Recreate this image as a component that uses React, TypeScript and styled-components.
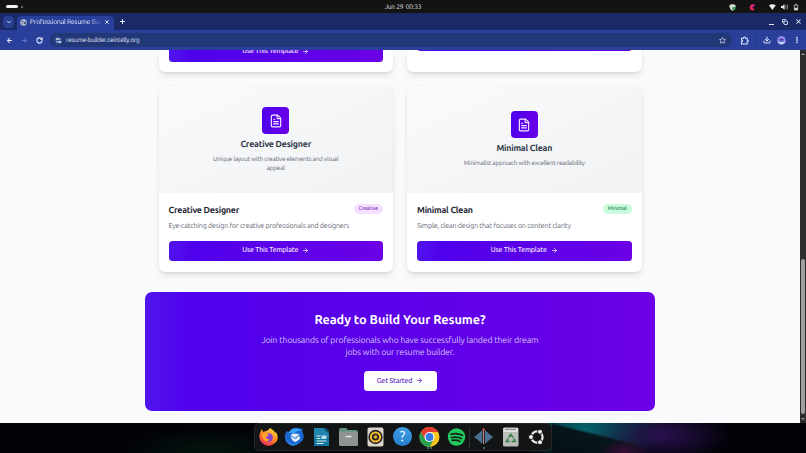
import * as React from 'react';
import styled, { createGlobalStyle } from 'styled-components';
import {
  ArrowLeft,
  ArrowRight,
  ChevronDown,
  Copy,
  Download,
  EllipsisVertical,
  FileText,
  Minus,
  Plus,
  RotateCw,
  Settings2,
  Star,
  X,
} from 'lucide-react';

type TTone = 'creative' | 'minimal';

type TTemplate = {
  name: string;
  preview: string;
  description: string;
  tag: string;
  tone: TTone;
};

const templates: TTemplate[] = [
  {
    name: 'Creative Designer',
    preview: 'Unique layout with creative elements and visual appeal',
    description: 'Eye-catching design for creative professionals and designers',
    tag: 'Creative',
    tone: 'creative',
  },
  {
    name: 'Minimal Clean',
    preview: 'Minimalist approach with excellent readability',
    description: 'Simple, clean design that focuses on content clarity',
    tag: 'Minimal',
    tone: 'minimal',
  },
];

const GlobalStyle = createGlobalStyle`
  * {
    box-sizing: border-box;
  }
  body {
    margin: 0;
    overflow: hidden;
    background: #000;
    font-family: Ubuntu, 'Noto Sans', 'Open Sans', sans-serif;
    text-rendering: geometricPrecision;
  }
  h2, h3, p {
    margin: 0;
  }
  svg {
    display: block;
    flex: none;
  }
`;

const Desktop = styled.div`
  width: 806px;
  height: 453px;
  display: flex;
  flex-direction: column;
  overflow: hidden;
`;

const SystemBar = styled.header`
  height: 13px;
  flex: none;
  display: grid;
  grid-template-columns: 1fr auto 1fr;
  align-items: center;
  padding: 0 6px;
  background: #131313;
  color: #e0e0e0;
  font-size: 6.6px;
  letter-spacing: -0.2px;
`;

const Workspaces = styled.div`
  display: flex;
  align-items: center;
  gap: 3px;
  &::before {
    content: '';
    width: 12px;
    height: 3px;
    border-radius: 2px;
    background: #f2f2f2;
  }
  &::after {
    content: '';
    width: 2px;
    height: 2px;
    border-radius: 50%;
    background: #858585;
  }
`;

const Clock = styled.div`
  padding-top: 1px;
  white-space: pre;
`;

const Tray = styled.div`
  display: flex;
  align-items: center;
  justify-content: flex-end;
`;

const TabStrip = styled.div`
  height: 17px;
  flex: none;
  display: flex;
  align-items: center;
  padding: 0 4px 0 3px;
  background: #1b2966;
  color: #e6ebfd;
`;

const TabSearch = styled.div`
  width: 11px;
  height: 12px;
  border-radius: 4px;
  background: #293f91;
  display: flex;
  align-items: center;
  justify-content: center;
`;

const Tab = styled.div`
  width: 97px;
  height: 14px;
  margin: 3px 0 0 3px;
  padding: 0 4px 2px 3px;
  border-radius: 4px 4px 0 0;
  background: #293f99;
  display: flex;
  align-items: center;
  gap: 3px;
`;

const TabTitle = styled.div`
  flex: 1;
  overflow: hidden;
  white-space: nowrap;
  font-size: 6.8px;
  letter-spacing: -0.17px;
  mask-image: linear-gradient(90deg, #000 82%, rgba(0, 0, 0, 0.1));
`;

const NewTab = styled.div`
  margin-left: 5px;
`;

const WindowButtons = styled.div`
  margin-left: auto;
  display: flex;
  align-items: center;
  gap: 7px;
`;

const Toolbar = styled.div`
  height: 20px;
  flex: none;
  display: flex;
  align-items: center;
  padding: 0 6px;
  background: #293f99;
  color: #e1e7fc;
`;

const NavButtons = styled.div`
  display: flex;
  align-items: center;
  gap: 8px;
`;

const AddressBar = styled.div`
  width: 682px;
  height: 14px;
  margin-left: 7px;
  padding: 0 6px 0 3px;
  border-radius: 7px;
  background: #223776;
  display: flex;
  align-items: center;
  font-size: 6.4px;
  letter-spacing: -0.24px;
  svg:last-child {
    margin-left: auto;
  }
`;

const SiteInfo = styled.span`
  width: 9px;
  height: 9px;
  margin-right: 4px;
  border-radius: 50%;
  background: #2b4389;
  display: flex;
  align-items: center;
  justify-content: center;
`;

const ToolbarActions = styled.div`
  margin-left: auto;
  display: flex;
  align-items: center;
`;

const Divider = styled.span`
  width: 1px;
  height: 8px;
  margin: 0 6.5px;
  background: #223577;
`;

const Viewport = styled.div`
  height: 373px;
  flex: none;
  display: flex;
  overflow: hidden;
`;

const Page = styled.main`
  flex: 1;
  display: flex;
  flex-direction: column;
  align-items: center;
  background: #f9fafc;
  overflow: hidden;
`;

const CardGrid = styled.section`
  width: 483px;
  display: grid;
  grid-template-columns: 1fr 1fr;
  column-gap: 14px;
  row-gap: 14px;
`;

const Card = styled.article`
  border-radius: 6px;
  background: #fff;
  overflow: hidden;
  box-shadow: 0 0 1px rgba(30, 41, 59, 0.16), 0 4px 7px -1px rgba(0, 0, 0, 0.11), 0 2px 3px -2px rgba(0, 0, 0, 0.1);
`;

// bottom edge of the row that is scrolled under the toolbar
const ScrolledCard = styled(Card)<{ $bottom: number }>`
  height: 22px;
  display: flex;
  align-items: flex-end;
  padding: 0 10px ${(p) => p.$bottom}px;
  border-radius: 0 0 6px 6px;
`;

const Preview = styled.div`
  height: 107px;
  padding-top: 1px;
  display: flex;
  flex-direction: column;
  align-items: center;
  justify-content: center;
  background: linear-gradient(155deg, #f9fafb, #f1f2f4);
`;

const PreviewIcon = styled.div`
  width: 27px;
  height: 27px;
  border-radius: 4px;
  background: linear-gradient(90deg, #4f00ec, #6900e6);
  color: #f3edff;
  display: flex;
  align-items: center;
  justify-content: center;
`;

const PreviewTitle = styled.h3`
  margin-top: 4px;
  color: #2b3444;
  font-size: 8.8px;
  font-weight: 600;
  line-height: 13px;
  letter-spacing: -0.2px;
`;

const PreviewText = styled.p`
  width: 136px;
  margin-top: 5px;
  color: #5d6572;
  font-size: 6.3px;
  line-height: 8.5px;
  text-align: center;
  letter-spacing: -0.19px;
`;

const CardBody = styled.div`
  padding: 10px 10px 10.5px;
`;

const CardHead = styled.div`
  height: 13px;
  display: flex;
  align-items: center;
  justify-content: space-between;
`;

const CardTitle = styled.h3`
  color: #1a2231;
  font-size: 8.8px;
  font-weight: 600;
  line-height: 12px;
  letter-spacing: -0.2px;
`;

const Tag = styled.span<{ $tone: TTone }>`
  height: 10px;
  margin-top: -1px;
  padding: 0 5px;
  border-radius: 5px;
  font-size: 5.5px;
  font-weight: 500;
  line-height: 11px;
  letter-spacing: -0.2px;
  color: ${(p) => (p.$tone === 'creative' ? '#9438c4' : '#2e8a55')};
  background: ${(p) => (p.$tone === 'creative' ? '#f3e1ff' : '#c9fbdc')};
`;

const CardText = styled.p`
  margin-top: 4px;
  color: #5d6572;
  font-size: 7.1px;
  line-height: 12px;
  white-space: nowrap;
  letter-spacing: -0.17px;
`;

const TemplateButton = styled.button`
  width: 100%;
  height: 20.5px;
  flex: none;
  padding: 0;
  border: 0;
  border-radius: 3.5px;
  background: linear-gradient(90deg, #4f14ec 0, #4f00ec 12%, #6b00e6 100%);
  color: #f1eaff;
  font-family: inherit;
  font-size: 7.1px;
  font-weight: 500;
  line-height: 11px;
  letter-spacing: -0.19px;
  text-rendering: inherit;
  display: flex;
  align-items: center;
  justify-content: center;
  gap: 4px;
  ${CardBody} & {
    margin-top: 8.5px;
  }
`;

const CallToAction = styled.section`
  width: 510px;
  height: 119px;
  margin-top: 20px;
  padding-top: 20px;
  border-radius: 7px;
  background: linear-gradient(90deg, #4f14ec 0, #5000ec 9%, #6c00e6 100%);
  display: flex;
  flex-direction: column;
  align-items: center;
  color: #fff;
`;

const CtaTitle = styled.h2`
  font-size: 12.7px;
  font-weight: 600;
  line-height: 17px;
  letter-spacing: -0.05px;
`;

const CtaText = styled.p`
  margin-top: 5.5px;
  color: #d4c3fb;
  font-size: 8.7px;
  line-height: 12px;
  text-align: center;
  white-space: nowrap;
  letter-spacing: -0.135px;
`;

const CtaButton = styled.button`
  width: 73px;
  height: 20px;
  margin-top: 12.5px;
  padding: 0;
  border: 0;
  border-radius: 3.5px;
  background: #fff;
  color: #5b1fc4;
  font-family: inherit;
  font-size: 7.1px;
  font-weight: 500;
  line-height: 10px;
  letter-spacing: -0.19px;
  text-rendering: inherit;
  display: flex;
  align-items: center;
  justify-content: center;
  gap: 4px;
`;

const Scrollbar = styled.div`
  width: 6px;
  flex: none;
  display: flex;
  flex-direction: column;
  align-items: center;
  justify-content: space-between;
  padding: 3px 0;
  background: #2c2c2c;
`;

const ScrollArrow = styled.span<{ $down?: boolean }>`
  border: 2px solid transparent;
  border-${(p) => (p.$down ? 'bottom' : 'top')}-width: 0;
  border-${(p) => (p.$down ? 'top' : 'bottom')}-color: #9d9d9d;
`;

const ScrollThumb = styled.span`
  width: 4px;
  height: 155px;
  margin: auto 0 4px;
  border-radius: 2px;
  background: #9f9f9f;
`;

const Wallpaper = styled.footer`
  height: 30px;
  flex: none;
  display: flex;
  justify-content: center;
  padding-right: 1px;
  background:
    radial-gradient(ellipse 24px 13px at 624px 29px, #3c0b36, transparent),
    linear-gradient(14deg, #050f14 0, #06161b 55%, transparent 60%) 552px 0 / 85px 30px no-repeat,
    radial-gradient(ellipse 70px 28px at 662px 12px, #29104f, transparent),
    radial-gradient(ellipse 85px 34px at 585px 6px, #07636a, #06424c 45%, transparent),
    radial-gradient(ellipse 90px 25px at 210px 28px, #03140f, transparent),
    #020207;
`;

const Dock = styled.nav`
  width: 298px;
  height: 28px;
  border: 1px solid #25272a;
  border-radius: 5px;
  background: #131415;
  display: flex;
  align-items: center;
  justify-content: space-between;
  padding: 0 3px;
`;

const DockItem = styled.div<{ $dots?: number }>`
  position: relative;
  width: 21px;
  height: 22px;
  &::after {
    content: '';
    display: ${(p) => (p.$dots ? 'block' : 'none')};
    position: absolute;
    left: ${(p) => (p.$dots === 2 ? 8 : 10)}px;
    top: 21px;
    width: 2px;
    height: 2px;
    border-radius: 50%;
    background: #4e806c;
    box-shadow: ${(p) => (p.$dots === 2 ? '3px 0 #4e806c' : 'none')};
  }
`;

const DockDivider = styled.span`
  width: 1px;
  height: 21px;
  margin: 0 -3.5px;
  background: #303133;
`;

const HelpMark = styled.span`
  width: 19px;
  height: 19px;
  margin: 1px;
  border-radius: 50%;
  background: linear-gradient(#3c9ee5, #2a7fd0);
  color: #fff;
  font-size: 14px;
  line-height: 19px;
  text-align: center;
  display: block;
`;

const TrayIcons = () => (
  <svg width="72" height="11" viewBox="0 0 72 11">
    <path d="M1.5 4l3-1 3 1v2q0 2-3 4-3-2-3-4z" fill="#d4ddd5" />
    <circle cx="5.8" cy="7.4" r="1.7" fill="#38a05a" />
    <path d="M26.5 4.5A2.8 2.8 0 1 0 26.5 8.5L24.5 6.5z" fill="#e62553" />
    <path d="M22 4l5-1-2 3z" fill="#d52ba4" />
    <path d="M41 4.3q3.2-2 6.8 0L44.3 9z" fill="#eee" />
    <path d="M53 5h1.5L56.5 3v6l-2-2H53z" fill="#eee" />
    <path d="M57.5 4.5q1 1.5 0 3M59 3.5q1.8 2.5 0 5" stroke="#bbb" strokeWidth=".7" fill="none" />
    <path d="M66.3 4h3.4v5h-3.4zM67.3 3.2h1.4" stroke="#ccc" strokeWidth=".8" fill="none" />
    <path d="M66.5 6.8h3V9h-3z" fill="#ddd" />
  </svg>
);

const Globe = () => (
  <svg width="7" height="7" viewBox="0 0 12 12">
    <circle cx="6" cy="6" r="5.5" fill="#bcc5dc" />
    <path d="M2 4l3-2 1 2-2 2zM7 5l4-1-1 4-3 1-1-2zM2 7l3 1v3z" fill="#4b5878" />
  </svg>
);

const Extensions = () => (
  <svg width="9" height="9" viewBox="0 0 18 18" fill="none" stroke="currentColor" strokeWidth="2.2" strokeLinejoin="round">
    <path d="M3 4.5h4q0-2.5 2-2.5t2 2.5h3.5V8.5q2.2.2 2.2 1.7t-2.2 1.7V16H3v-4q2-.3 2-1.9T3 8.3z" />
  </svg>
);

const Avatar = () => (
  <svg width="9" height="9" viewBox="0 0 18 18">
    <circle cx="9" cy="9" r="8.5" fill="#a59af0" />
    <path d="M3 7q6-6 12 0v2H3z" fill="#5a46b4" />
    <path d="M3 10q6 3 12 0-1 6-6 6t-6-6z" fill="#d3dcfa" />
    <path d="M5 9h8v3H5z" fill="#4565bc" />
  </svg>
);

const Firefox = () => (
  <svg width="21" height="22" viewBox="0 0 21 22">
    <defs>
      <linearGradient id="fox" x1=".8" y1="0" x2=".3" y2="1">
        <stop offset="0" stopColor="#ffdc3d" />
        <stop offset=".5" stopColor="#ff8a22" />
        <stop offset="1" stopColor="#ed2558" />
      </linearGradient>
    </defs>
    <path d="M2 7q1-3 2-4l1 3 3-1q2 0 4-3 5 3 5 5l1-1q4 7-1 11-7 6-13 0Q0 13 2 7z" fill="url(#fox)" />
    <circle cx="10.7" cy="11.5" r="4.2" fill="#8044cc" />
    <path d="M4 8l4-1 3 2-3 2q1 3 4 2-3 4-6 1-2-2-2-6z" fill="#ffa42a" />
  </svg>
);

const Thunderbird = () => (
  <svg width="21" height="22" viewBox="0 0 21 22">
    <path d="M1 12Q0 8 3 5l2 1q3-5 9-4l5 1-1 2q4 7-1 11-6 6-12 2-4-2-4-6z" fill="#1967cf" />
    <path d="M4 8q4-7 11-5l3 2q-5-1-7 2-4-1-7 1z" fill="#37a2f4" />
    <path d="M6.5 10l2-2.5 6.5.5 1 5-4.500 3q-4-1-5-6z" fill="#e4effb" />
    <path d="M7 10l4.5 2.5L15 9" stroke="#5694db" strokeWidth="1.2" fill="none" />
    <path d="M2 12q3 8 12 5-4 4-8 2-4-3-4-7z" fill="#2f87e5" />
  </svg>
);

const Writer = () => (
  <svg width="21" height="22" viewBox="0 0 21 22">
    <path d="M3 2h9l6 5v13H3z" fill="#12789f" />
    <path d="M12 2h3l3 3v4z" fill="#0a5272" />
    <path d="M3 2h9l6 6v3H3z" fill="#2185ad" />
    <path d="M5.5 10h4M5.5 12.5h4M5.5 15h10M5.5 17.5h7" stroke="#dceef5" strokeWidth="1.1" />
    <path d="M10.5 9.5h5v3.5h-5z" fill="#b8dfed" />
  </svg>
);

const Files = () => (
  <svg width="21" height="22" viewBox="0 0 21 22">
    <path d="M1 4q0-2 2-2h5l2 2h8q2 0 2 2v5H1z" fill="#5d9182" />
    <rect x="1" y="5.5" width="19" height="14.5" rx="1.5" fill="#8c9490" />
    <path d="M7.5 10.5h6" stroke="#e8ebe9" strokeWidth="1.5" />
  </svg>
);

const Rhythmbox = () => (
  <svg width="21" height="22" viewBox="0 0 21 22">
    <rect x="2.5" y="1.5" width="16" height="19" rx="2" fill="#dcd5cc" />
    <circle cx="10.5" cy="11" r="7.2" fill="#292725" />
    <circle cx="10.5" cy="11" r="4.6" fill="none" stroke="#f3bd2e" strokeWidth="2" />
    <circle cx="10.5" cy="11" r="1.8" fill="#e5b02b" />
  </svg>
);

const Chrome = () => (
  <svg width="21" height="22" viewBox="0 0 21 22">
    <circle cx="10.5" cy="11" r="10" fill="#f5c51d" />
    <path d="M1.8 6A10 10 0 0 1 19.2 6H10.5L6.2 13.5z" fill="#e23c2e" />
    <path d="M1.8 6A10 10 0 0 0 10.5 21L14.8 13.5H6.2z" fill="#27a14b" />
    <circle cx="10.5" cy="11" r="5" fill="#fff" />
    <circle cx="10.5" cy="11" r="3.9" fill="#3479e5" />
  </svg>
);

const Spotify = () => (
  <svg width="21" height="22" viewBox="0 0 21 22">
    <circle cx="10.5" cy="11" r="8.7" fill="#20ca5d" />
    <path
      d="M5 8.3q6-1.8 11.5 1M5.5 11.5q5-1.3 9.8 1M6 14.4q4.3-1 8 1"
      stroke="#14231a"
      strokeWidth="1.7"
      strokeLinecap="round"
      fill="none"
    />
  </svg>
);

const Scan = () => (
  <svg width="21" height="22" viewBox="0 0 21 22">
    <path d="M9.3 4v14L5 14 1 11l4-3z" fill="#4b7094" />
    <path d="M11.9 4v14l4.3-4 4-3-4-3z" fill="#4b7094" />
    <path d="M10.6 4v14" stroke="#cf8d8a" strokeWidth="1" />
    <circle cx="10.6" cy="3.5" r="1.2" fill="#dc4a46" />
  </svg>
);

const Trash = () => (
  <svg width="21" height="22" viewBox="0 0 21 22">
    <rect x="3" y="1.5" width="15.5" height="19" rx="1.5" fill="#b9bcb9" />
    <path d="M3.5 2h14.5v4H3.5z" fill="#dedfdd" />
    <path d="M5 3.3h11" stroke="#777b78" strokeWidth="1" />
    <path d="M8.6 11.5l2.2-3 2.2 3M14 12.5l1 3h-3.5M9.8 15.5H6.6l1.4-3" stroke="#318248" strokeWidth="1.7" fill="none" />
  </svg>
);

const UbuntuLogo = () => (
  <svg width="21" height="22" viewBox="0 0 21 22">
    <circle cx="11" cy="11" r="5.6" fill="none" stroke="#eee" strokeWidth="2.2" />
    <g fill="#f4f4f4" stroke="#131415" strokeWidth="1">
      <circle cx="5" cy="11" r="2.5" />
      <circle cx="14" cy="5.8" r="2.5" />
      <circle cx="14" cy="16.2" r="2.5" />
    </g>
  </svg>
);

const UseTemplate = () => (
  <TemplateButton>
    Use This Template <ArrowRight size={7} strokeWidth={2.6} />
  </TemplateButton>
);

const TemplateCard = ({ template }: { template: TTemplate }) => (
  <Card>
    <Preview>
      <PreviewIcon>
        <FileText size={14} strokeWidth={2} />
      </PreviewIcon>
      <PreviewTitle>{template.name}</PreviewTitle>
      <PreviewText>{template.preview}</PreviewText>
    </Preview>
    <CardBody>
      <CardHead>
        <CardTitle>{template.name}</CardTitle>
        <Tag $tone={template.tone}>{template.tag}</Tag>
      </CardHead>
      <CardText>{template.description}</CardText>
      <UseTemplate />
    </CardBody>
  </Card>
);

const App = () => (
  <Desktop>
    <GlobalStyle />
    <SystemBar>
      <Workspaces />
      <Clock>{'Jun 29  00:33'}</Clock>
      <Tray>
        <TrayIcons />
      </Tray>
    </SystemBar>
    <TabStrip>
      <TabSearch>
        <ChevronDown size={6} strokeWidth={4} />
      </TabSearch>
      <Tab>
        <Globe />
        <TabTitle>Professional Resume Buil</TabTitle>
        <X size={6} strokeWidth={3.5} />
      </Tab>
      <NewTab>
        <Plus size={7} strokeWidth={3.5} />
      </NewTab>
      <WindowButtons>
        <Minus size={7} strokeWidth={4} style={{ marginTop: 5 }} />
        <Copy size={6} strokeWidth={3.5} style={{ transform: 'scaleX(-1) rotate(90deg)' }} />
        <X size={7} strokeWidth={3.5} />
      </WindowButtons>
    </TabStrip>
    <Toolbar>
      <NavButtons>
        <ArrowLeft size={7} strokeWidth={3.5} />
        <ArrowRight size={7} strokeWidth={3} color="#6f80c0" />
        <RotateCw size={7} strokeWidth={3.5} />
      </NavButtons>
      <AddressBar>
        <SiteInfo>
          <Settings2 size={7} strokeWidth={3} />
        </SiteInfo>
        resume-builder.ceintelly.org
        <Star size={7} strokeWidth={2.6} />
      </AddressBar>
      <ToolbarActions>
        <Extensions />
        <Divider />
        <Download size={8} strokeWidth={3} style={{ marginRight: 6.5 }} />
        <Avatar />
        <EllipsisVertical size={8} strokeWidth={3.6} style={{ marginLeft: 7, marginRight: -1 }} />
      </ToolbarActions>
    </Toolbar>
    <Viewport>
      <Page>
        <CardGrid>
          <ScrolledCard $bottom={10.5}>
            <UseTemplate />
          </ScrolledCard>
          <ScrolledCard $bottom={21}>
            <UseTemplate />
          </ScrolledCard>
          {templates.map((t) => (
            <TemplateCard key={t.name} template={t} />
          ))}
        </CardGrid>
        <CallToAction>
          <CtaTitle>Ready to Build Your Resume?</CtaTitle>
          <CtaText>
            Join thousands of professionals who have successfully landed their dream
            <br />
            jobs with our resume builder.
          </CtaText>
          <CtaButton>
            Get Started <ArrowRight size={7} strokeWidth={2.6} />
          </CtaButton>
        </CallToAction>
      </Page>
      <Scrollbar>
        <ScrollArrow />
        <ScrollThumb />
        <ScrollArrow $down />
      </Scrollbar>
    </Viewport>
    <Wallpaper>
      <Dock>
        <DockItem><Firefox /></DockItem>
        <DockItem><Thunderbird /></DockItem>
        <DockItem><Writer /></DockItem>
        <DockItem><Files /></DockItem>
        <DockItem><Rhythmbox /></DockItem>
        <DockItem><HelpMark>?</HelpMark></DockItem>
        <DockItem $dots={2}><Chrome /></DockItem>
        <DockItem><Spotify /></DockItem>
        <DockDivider />
        <DockItem $dots={1}><Scan /></DockItem>
        <DockItem><Trash /></DockItem>
        <DockItem><UbuntuLogo /></DockItem>
      </Dock>
    </Wallpaper>
  </Desktop>
);

export default App;
